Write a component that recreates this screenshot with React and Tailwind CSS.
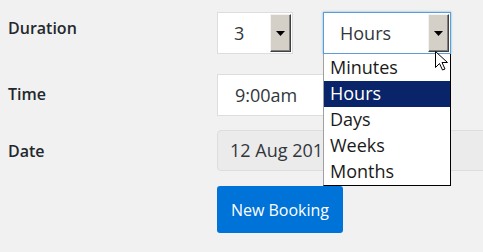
import React from "react";

const Arrow = () => (
  <span className="flex h-full w-[21px] items-center justify-center border border-t-[#f4f3ef] border-l-[#f4f3ef] border-r-[#404040] border-b-[#404040] bg-[#d4d0c8] shadow-[inset_-1px_-1px_0_#808080]">
    <svg width="9" height="5" viewBox="0 0 9 5">
      <path d="M0 0h9L4.5 5z" fill="#000" />
    </svg>
  </span>
);

const options = ["Minutes", "Hours", "Days", "Weeks", "Months"];

export default function App() {
  return (
    <div className="relative h-[252px] w-[483px] overflow-hidden bg-[#f1f1f1] font-['Open_Sans',sans-serif] text-[#23282d]">
      <div className="flex flex-col pl-[8px] pt-[12px]">
        {/* Duration */}
        <div className="flex h-[42px]">
          <div className="w-[209px] shrink-0 pt-[5px] text-[16px] font-semibold leading-[22px]">Duration</div>
          <div className="flex gap-[30px]">
            <div className="flex h-[42px] w-[76px] items-center border border-[#dddddd] bg-white py-px pr-px">
              <span className="flex-1 pl-[16px] text-[18px] text-[#32373c]">3</span>
              <Arrow />
            </div>
            <div className="relative z-10">
              <div className="flex h-[42px] w-[128px] items-center border border-[#5b9dd9] bg-white py-px pr-px shadow-[0_0_2px_rgba(30,140,190,0.6)]">
                <span className="flex-1 pl-[16px] text-[18px] text-[#32373c]">Hours</span>
                <Arrow />
              </div>
              <ul className="absolute left-0 top-[42px] w-[128px] border border-t-0 border-l-[#a0a0a0] border-r-black border-b-black bg-white pt-px">
                {options.map((o) => (
                  <li
                    key={o}
                    className={
                      o === "Hours"
                        ? "h-[26px] bg-[#0a246a] pl-[6px] text-[18px] leading-[25px] text-white"
                        : "h-[26px] pl-[6px] text-[18px] leading-[25px] text-[#1a1a1a]"
                    }
                  >
                    {o}
                  </li>
                ))}
              </ul>
            </div>
          </div>
        </div>

        {/* Time */}
        <div className="mt-[20px] flex h-[42px]">
          <div className="w-[209px] shrink-0 pt-[9px] text-[16px] font-semibold leading-[22px]">Time</div>
          <div className="flex h-[42px] w-[200px] shrink-0 items-center border border-[#dddddd] bg-white pl-[17px] text-[18px] text-[#32373c]">
            9:00am
          </div>
        </div>

        {/* Date */}
        <div className="mt-[14px] flex h-[41px]">
          <div className="w-[209px] shrink-0 pt-[10px] text-[16px] font-semibold leading-[22px]">Date</div>
          <div className="flex h-[41px] w-[320px] shrink-0 items-center rounded-[4px] border border-[#dddddd] bg-[#ebebeb] pl-[12px] text-[18px] text-[#32373c]">
            12 Aug 2015
          </div>
        </div>

        <div className="mt-[15px] flex">
          <button className="ml-[209px] h-[47px] w-[126px] rounded-[3px] bg-[#0073d8] text-[16px] text-white">
            New Booking
          </button>
        </div>
      </div>

      {/* mouse pointer */}
      <svg className="absolute left-[435px] top-[51px] z-20" width="13" height="20" viewBox="0 0 13 20">
        <path d="M0.5 0.5v16l4-4 3 6.5 2.5-1-3-6.5h5.5z" fill="#fff" stroke="#000" strokeWidth="1" />
      </svg>
    </div>
  );
}
